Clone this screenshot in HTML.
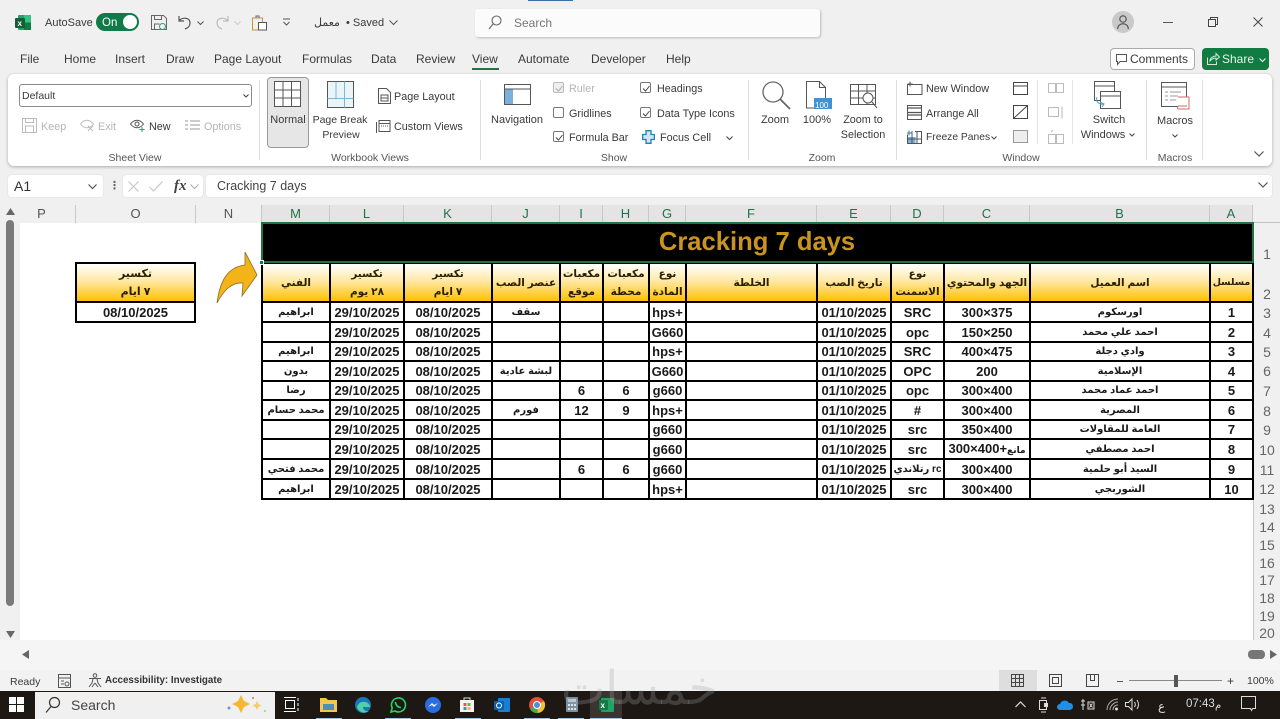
<!DOCTYPE html>
<html><head><meta charset="utf-8"><style>
html,body{margin:0;padding:0;width:1280px;height:719px;overflow:hidden;background:#f0f0f0;font-family:"Liberation Sans","DejaVu Sans",sans-serif}
.t{position:absolute;white-space:nowrap;line-height:16px;font-size:11.3px;color:#3a3a3a}
.c{transform:translateX(-50%);text-align:center}
.b{position:absolute;box-sizing:border-box}
svg{position:absolute;overflow:visible}
.dis{color:#b5b5b5}
.ch{position:absolute;top:205px;height:18px;line-height:18px;text-align:center;font-size:13px;color:#217346;background:#e4e4e4;border-right:1px solid #c8c8c8;box-sizing:border-box}
.cn{color:#555;background:#f0f0f0}
.rn{position:absolute;left:1254px;width:26px;text-align:center;font-size:14px;color:#666;line-height:16px}
table{position:absolute;border-collapse:collapse;table-layout:fixed;font-family:"Liberation Sans","DejaVu Sans",sans-serif}
td{border:2px solid #000;padding:0;text-align:center;overflow:hidden;white-space:nowrap;font-weight:bold;font-size:13px;color:#1a1a1a;line-height:15px;background:#fff;box-sizing:border-box}
td.a{font-size:10px;font-weight:bold}
tr.h td{background:linear-gradient(#fff 0%,#ffe9a8 45%,#ffc000 100%);font-size:10.5px;line-height:18px;color:#2a2000}
.cb{position:absolute;width:11px;height:11px;border:1px solid #777;border-radius:2px;box-sizing:border-box;background:#fff}
.cb svg{left:1px;top:1px}
</style></head><body>

<!-- title bar -->
<svg style="left:15px;top:15px" width="16" height="16"><rect x="3" width="13" height="15" rx="1" fill="#21a366"/><rect x="9" y="0" width="7" height="7" fill="#33c481"/><rect x="9" y="8" width="7" height="7" fill="#107c41"/><rect y="3" width="10" height="10" rx="1" fill="#185c37"/><text x="2.5" y="11" font-size="8" font-weight="bold" fill="#fff" font-family="Liberation Sans">x</text></svg>
<div class="t" style="left:45px;top:15px;font-size:11px">AutoSave</div>
<div class="b" style="left:96px;top:13px;width:43px;height:18px;border-radius:9px;background:#0f7b48"></div>
<div class="t" style="left:102px;top:15px;color:#fff;font-size:11.5px">On</div>
<div class="b" style="left:123px;top:15px;width:14px;height:14px;border-radius:7px;background:#fff"></div>
<svg style="left:151px;top:15px" width="16" height="16" fill="none" stroke="#666"><path d="M.5.500h12l3 3v11H.500z"/><path d="M3.500.500v4h7v-4M3.500 14v-5h5"/><circle cx="11.500" cy="11.500" r="3" stroke="#3d9b78"/></svg>
<svg style="left:178px;top:15px" width="14" height="15" fill="none" stroke="#555" stroke-width="1.200"><path d="M1 1v5h5M1 6c3-4 11-4 11 2 0 3-2 5-5 6"/></svg>
<svg style="left:197px;top:21px" width="7" height="4" fill="none" stroke="#555"><path d="M.5.500l3 3 3-3"/></svg>
<svg style="left:215px;top:15px" width="14" height="15" fill="none" stroke="#bbb" stroke-width="1.200"><path d="M13 1v5H8M13 6C10 2 2 2 2 8c0 3 2 5 5 6"/></svg>
<svg style="left:234px;top:21px" width="7" height="4" fill="none" stroke="#ccc"><path d="M.5.500l3 3 3-3"/></svg>
<svg style="left:252px;top:15px" width="16" height="16" fill="none" stroke="#c8933a"><path d="M.5 3h10v12H.500z"/><path d="M4 3V1h3v2" stroke="#666"/><path d="M6.500 7.500h8v7.500h-8z" stroke="#555" fill="#fff"/></svg>
<svg style="left:282px;top:18px" width="9" height="9" fill="none" stroke="#555"><path d="M1 1h7M1.500 4l3 3 3-3"/></svg>
<div class="t" style="left:314px;top:15px;font-size:11px">معمل</div>
<div class="t" style="left:346px;top:15px;font-size:11px">• Saved</div>
<svg style="left:389px;top:20px" width="9" height="5" fill="none" stroke="#555"><path d="M.5.500l4 4 4-4"/></svg>

<!-- search -->
<div class="b" style="left:475px;top:9px;width:345px;height:28px;background:#fbfbfb;border-radius:3px;box-shadow:1px 1px 2px #bbb"></div>
<svg style="left:488px;top:15px" width="14" height="15" fill="none" stroke="#666" stroke-width="1.100"><circle cx="8.500" cy="5.500" r="4.500"/><path d="M5 9l-4 5"/></svg>
<div class="t" style="left:514px;top:15px;color:#777;font-size:12px">Search</div>
<div class="b" style="left:528px;top:0;width:45px;height:1px;background:#3a6ea5"></div>

<!-- user and window controls -->
<div class="b" style="left:1112px;top:11px;width:22px;height:22px;border-radius:11px;background:#c9c9c9"></div>
<svg style="left:1117px;top:15px" width="12" height="14" fill="none" stroke="#555" stroke-width="1.200"><circle cx="6" cy="4" r="3.200"/><path d="M.7 14c0-7 10.600-7 10.600 0"/></svg>
<div class="b" style="left:1163px;top:22px;width:10px;height:1px;background:#555"></div>
<svg style="left:1208px;top:17px" width="10" height="10" fill="none" stroke="#444"><path d="M.5 2.500h7v7h-7zM2.500 2.500v-2h7v7h-2"/></svg>
<svg style="left:1253px;top:17px" width="10" height="10" fill="none" stroke="#444"><path d="M.5.500l9 9M9.500.500l-9 9"/></svg>

<!-- tabs -->
<div class="t" style="left:20px;top:51px;font-size:12px">File</div>
<div class="t" style="left:64px;top:51px;font-size:12px">Home</div>
<div class="t" style="left:115px;top:51px;font-size:12px">Insert</div>
<div class="t" style="left:166px;top:51px;font-size:12px">Draw</div>
<div class="t" style="left:214px;top:51px;font-size:12px">Page Layout</div>
<div class="t" style="left:302px;top:51px;font-size:12px">Formulas</div>
<div class="t" style="left:371px;top:51px;font-size:12px">Data</div>
<div class="t" style="left:416px;top:51px;font-size:12px">Review</div>
<div class="t" style="left:472px;top:51px;font-size:12px">View</div>
<div class="b" style="left:472px;top:68px;width:27px;height:2px;background:#217346"></div>
<div class="t" style="left:518px;top:51px;font-size:12px">Automate</div>
<div class="t" style="left:591px;top:51px;font-size:12px">Developer</div>
<div class="t" style="left:666px;top:51px;font-size:12px">Help</div>

<div class="b" style="left:1110px;top:48px;width:85px;height:22px;background:#fff;border:1px solid #aaa;border-radius:4px"></div>
<svg style="left:1116px;top:54px" width="12" height="11" fill="none" stroke="#555"><path d="M.5.500h10v7H4l-2.500 3v-3h-1z"/></svg>
<div class="t" style="left:1130px;top:51px;font-size:12px">Comments</div>
<div class="b" style="left:1202px;top:48px;width:67px;height:22px;background:#107c41;border-radius:4px"></div>
<svg style="left:1207px;top:53px" width="13" height="12" fill="none" stroke="#cfe8da"><path d="M.5 4.500v7h9v-3M3 8c0-3 3-5 6-5V.5l3.500 3.500L9 7V5C6.500 5 4.500 6 3 8z"/></svg>
<div class="t" style="left:1222px;top:51px;color:#e8f4ee;font-size:12px">Share</div>
<svg style="left:1259px;top:58px" width="7" height="4" fill="none" stroke="#fff"><path d="M.5.500l3 3 3-3"/></svg>

<!-- ribbon -->
<div class="b" style="left:8px;top:74px;width:1264px;height:92px;background:#fff;border-radius:6px;box-shadow:0 1px 3px #aaa"></div>
<div class="b" style="left:19px;top:84px;width:233px;height:23px;border:1px solid #8a8a8a;border-radius:3px;background:#fff"></div>
<div class="t" style="left:22px;top:88px;font-size:10.500px">Default</div>
<svg style="left:243px;top:94px" width="6" height="4" fill="none" stroke="#444"><path d="M.5.500l2.500 2.500 2.500-2.500"/></svg>
<svg style="left:22px;top:118px" width="15" height="15" fill="none" stroke="#bbb"><path d="M.5.500h14v14H.500zM3.500.500v4h8v-4M3.500 14v-6h8v6"/></svg>
<div class="t dis" style="left:41px;top:119px;font-size:10.800px">Keep</div>
<svg style="left:80px;top:119px" width="15" height="13" fill="none" stroke="#bbb"><path d="M.5 5c4-5 9-5 13 0-4 5-9 5-13 0z"/><path d="M8 7l5 5M13 7l-5 5"/></svg>
<div class="t dis" style="left:98px;top:119px;font-size:10.800px">Exit</div>
<svg style="left:130px;top:120px" width="16" height="12" fill="none" stroke="#555"><path d="M.5 4c4-5 9-5 13 0-4 5-9 5-13 0z"/><circle cx="7" cy="4" r="2"/><path d="M12 7v5M9.500 9.500h5" stroke="#3a9b6a"/></svg>
<div class="t" style="left:149px;top:119px;font-size:10.800px">New</div>
<svg style="left:185px;top:119px" width="15" height="12" fill="none" stroke="#bbb" stroke-width="1.500"><path d="M0 2h3M5 2h10M0 6h3M5 6h10M0 10h3M5 10h10"/></svg>
<div class="t dis" style="left:204px;top:119px;font-size:10.800px">Options</div>
<div class="t c" style="left:135px;top:150px;font-size:10.500px;color:#555">Sheet View</div>
<div class="b" style="left:259px;top:80px;width:1px;height:80px;background:#dcdcdc"></div>

<div class="b" style="left:267px;top:77px;width:42px;height:71px;background:#e6e6e6;border:1px solid #999;border-radius:4px"></div>
<svg style="left:274px;top:81px" width="28" height="27" fill="#fff" stroke="#555"><path d="M.5.500h26v25H.500zM9 .500v25M17.500 .500v25M.5 9h26M.5 17h26"/></svg>
<div class="t c" style="left:288px;top:112px;font-size:11px">Normal</div>
<svg style="left:327px;top:81px" width="27" height="27" fill="none" stroke="#555"><rect x=".5" y=".5" width="26" height="26" fill="#eaf5f8"/><path d="M9 .500v18M17.500 .500v26M.5 17.500h26" stroke="#7fb7d0"/></svg>
<div class="t c" style="left:340px;top:112px;font-size:10.500px">Page Break</div>
<div class="t c" style="left:341px;top:127px;font-size:10.500px">Preview</div>
<svg style="left:378px;top:88px" width="13" height="16" fill="none" stroke="#555"><path d="M.5.500h8l4 4v11H.500z"/><path d="M3 7h7v6H3zM3 10h7"/></svg>
<div class="t" style="left:394px;top:89px;font-size:10.800px">Page Layout</div>
<svg style="left:376px;top:118px" width="15" height="15" fill="none" stroke="#555"><path d="M3 2.500h11v11H3zM.5 4v11M3 5.500h11"/><path d="M5 8h7" stroke-dasharray="1 1"/></svg>
<div class="t" style="left:394px;top:119px;font-size:10.800px">Custom Views</div>
<div class="t c" style="left:370px;top:150px;font-size:10.500px;color:#555">Workbook Views</div>
<div class="b" style="left:480px;top:80px;width:1px;height:80px;background:#dcdcdc"></div>

<svg style="left:504px;top:84px" width="27" height="21" fill="#fff" stroke="#555"><path d="M.5.500h26v20H.500z"/><rect x="1" y="5" width="8" height="15" fill="#7ab0de" stroke="none"/><path d="M.5 5h26"/></svg>
<div class="t c" style="left:517px;top:112px;font-size:11px">Navigation</div>

<div class="cb" style="left:553px;top:82px;border-color:#bbb;background:#eee"><svg width="9" height="9" fill="none" stroke="#aaa"><path d="M1 4.500l2.500 2.500 4-5"/></svg></div>
<div class="t dis" style="left:569px;top:81px;font-size:10.800px">Ruler</div>
<div class="cb" style="left:553px;top:107px"></div>
<div class="t" style="left:569px;top:106px;font-size:10.800px">Gridlines</div>
<div class="cb" style="left:553px;top:131px"><svg width="9" height="9" fill="none" stroke="#444"><path d="M1 4.500l2.500 2.500 4-5"/></svg></div>
<div class="t" style="left:569px;top:130px;font-size:10.800px">Formula Bar</div>
<div class="cb" style="left:640px;top:82px"><svg width="9" height="9" fill="none" stroke="#444"><path d="M1 4.500l2.500 2.500 4-5"/></svg></div>
<div class="t" style="left:657px;top:81px;font-size:10.800px">Headings</div>
<div class="cb" style="left:640px;top:107px"><svg width="9" height="9" fill="none" stroke="#444"><path d="M1 4.500l2.500 2.500 4-5"/></svg></div>
<div class="t" style="left:657px;top:106px;font-size:10.800px">Data Type Icons</div>
<svg style="left:642px;top:130px" width="13" height="14" fill="#cfe6f5" stroke="#2b7cb3" stroke-width="1.300"><path d="M4 .7h5v3.800h3.300v5H9v3.800H4V9.500H.7v-5H4z"/></svg>
<div class="t" style="left:660px;top:130px;font-size:10.800px">Focus Cell</div>
<svg style="left:726px;top:136px" width="7" height="4" fill="none" stroke="#444"><path d="M.5.500l3 3 3-3"/></svg>
<div class="t c" style="left:614px;top:150px;font-size:10.500px;color:#555">Show</div>
<div class="b" style="left:748px;top:80px;width:1px;height:80px;background:#dcdcdc"></div>

<svg style="left:762px;top:81px" width="29" height="29" fill="none" stroke="#666" stroke-width="1.300"><circle cx="11" cy="11" r="10"/><path d="M18 18l10 10" stroke-width="1.800"/></svg>
<div class="t c" style="left:775px;top:112px;font-size:11px">Zoom</div>
<svg style="left:806px;top:81px" width="27" height="29" fill="none" stroke="#555"><path d="M.5 27V.5h13l6 6V27z" fill="#fff"/><path d="M13.500 .5v6h6"/><rect x="8" y="17" width="18" height="11" fill="#3d93d6" stroke="none"/></svg>
<div class="t" style="left:815px;top:98px;font-size:8px;color:#fff">100</div>
<div class="t c" style="left:817px;top:112px;font-size:11px">100%</div>
<svg style="left:850px;top:84px" width="28" height="26" fill="none" stroke="#555"><path d="M.5.500h25v20H.500zM8.500.500v20M17 .500v20M.5 7h25M.5 14h25"/><circle cx="18" cy="14" r="5" fill="#fff"/><path d="M22 18l5 6"/></svg>
<div class="t c" style="left:863px;top:112px;font-size:10.800px">Zoom to</div>
<div class="t c" style="left:863px;top:127px;font-size:10.800px">Selection</div>
<div class="t c" style="left:822px;top:150px;font-size:10.500px;color:#555">Zoom</div>
<div class="b" style="left:896px;top:80px;width:1px;height:80px;background:#dcdcdc"></div>

<svg style="left:907px;top:81px" width="16" height="14" fill="none" stroke="#555"><path d="M.5 3.500h14.500v10H.500zM3 .5v5M.5 3h5M7 3.500h8" /></svg>
<div class="t" style="left:926px;top:81px;font-size:10.800px">New Window</div>
<svg style="left:907px;top:105px" width="15" height="15" fill="none" stroke="#555"><path d="M.5.500h14v14H.500z"/><path d="M.5 3h14M.5 7.500h14M.5 10h14" stroke-width="1.300"/></svg>
<div class="t" style="left:926px;top:106px;font-size:10.800px">Arrange All</div>
<svg style="left:907px;top:130px" width="15" height="14" fill="none" stroke="#555"><rect x=".5" y="7" width="8" height="7" fill="#7ab0de" stroke="none"/><path d="M.5 4.500v9h14v-12H8M.5 9h14M5 1v12M10 1v12"/><path d="M2 .5v5M0 3h5" stroke="#2b7cb3"/></svg>
<div class="t" style="left:926px;top:130px;font-size:10.300px">Freeze Panes</div>
<svg style="left:991px;top:136px" width="6" height="4" fill="none" stroke="#444"><path d="M.5.500l2.500 2.500 2.500-2.500"/></svg>
<svg style="left:1013px;top:82px" width="15" height="13" fill="none" stroke="#444"><path d="M.5.500h14v12H.500zM.5 4h14"/></svg>
<svg style="left:1013px;top:105px" width="15" height="14" fill="none" stroke="#444"><path d="M.5.500h14v13H.500zM.5 13.500l14-13"/></svg>
<svg style="left:1013px;top:130px" width="15" height="13" fill="#eee" stroke="#999"><path d="M.5.500h14v12H.500z"/></svg>
<div class="b" style="left:1037px;top:80px;width:1px;height:64px;background:#e5e5e5"></div>
<svg style="left:1048px;top:82px" width="16" height="11" fill="none" stroke="#bbb"><path d="M.5 1.500h7v9h-7zM8.500 1.500h7v9h-7z"/></svg>
<svg style="left:1048px;top:106px" width="16" height="13" fill="none" stroke="#bbb"><path d="M.5 1.500h10v9h-10zM14 .5v12"/></svg>
<svg style="left:1048px;top:129px" width="16" height="15" fill="none" stroke="#bbb"><path d="M.5 5.500h7v9h-7zM8.500 5.500h7v9h-7zM3 3l2-2"/></svg>
<div class="b" style="left:1072px;top:80px;width:1px;height:64px;background:#e5e5e5"></div>
<svg style="left:1094px;top:81px" width="30" height="28" fill="#fff" stroke="#555"><path d="M.5.500h20v19H.500zM.5 5h20"/><path d="M6.500 10.500h20v17h-20zM6.500 15h20"/><path d="M3 16c-2 5 3 8 7 7M6 21l4 2-2 3" fill="none" stroke="#4ea3c4"/></svg>
<div class="t c" style="left:1109px;top:112px;font-size:11px">Switch</div>
<div class="t c" style="left:1103px;top:127px;font-size:11px">Windows</div>
<svg style="left:1129px;top:133px" width="6" height="4" fill="none" stroke="#444"><path d="M.5.500l2.500 2.500 2.500-2.500"/></svg>
<div class="t c" style="left:1021px;top:150px;font-size:10.500px;color:#555">Window</div>
<div class="b" style="left:1146px;top:80px;width:1px;height:80px;background:#dcdcdc"></div>
<svg style="left:1161px;top:82px" width="30" height="28" fill="none" stroke="#555"><path d="M.5.500h25v24H.500zM.5 5h25"/><path d="M4 10h3M9 10h11M4 14h3M9 14h8M4 18h3M9 18h6" stroke="#999"/><path d="M17 15h11v12H18c-2 0-2-3 0-3h8" stroke="#d46a6a" fill="#fff"/></svg>
<div class="t c" style="left:1175px;top:113px;font-size:11px">Macros</div>
<svg style="left:1172px;top:134px" width="6" height="4" fill="none" stroke="#444"><path d="M.5.500l2.500 2.500 2.500-2.500"/></svg>
<div class="t c" style="left:1175px;top:150px;font-size:10.500px;color:#555">Macros</div>
<div class="b" style="left:1202px;top:80px;width:1px;height:80px;background:#e2e2e2"></div>
<svg style="left:1254px;top:151px" width="10" height="6" fill="none" stroke="#555" stroke-width="1.200"><path d="M.5.500l4.500 4.500 4.500-4.500"/></svg>

<!-- formula bar -->
<div class="b" style="left:8px;top:175px;width:95px;height:22px;background:#fff;border-radius:3px;box-shadow:0 0 1px #bbb"></div>
<div class="t" style="left:14px;top:178px;font-size:14px;color:#333">A1</div>
<svg style="left:88px;top:184px" width="9" height="5" fill="none" stroke="#444"><path d="M.5.500l4 4 4-4"/></svg>
<div class="t" style="left:109px;top:178px;font-weight:bold;color:#666;font-size:11px">⋮</div>
<div class="b" style="left:123px;top:175px;width:80px;height:22px;background:#fff;border-radius:3px;box-shadow:0 0 1px #bbb"></div>
<svg style="left:128px;top:181px" width="12" height="11" fill="none" stroke="#c8c8c8" stroke-width="1.200"><path d="M.5.500l10 10M10.500.500l-10 10"/></svg>
<svg style="left:149px;top:181px" width="14" height="11" fill="none" stroke="#c8c8c8" stroke-width="1.200"><path d="M.5 6l4 4 9-9.500"/></svg>
<div class="t" style="left:174px;top:178px;font-family:'Liberation Serif',serif;font-style:italic;font-weight:bold;font-size:15px;color:#444">fx</div>
<svg style="left:190px;top:184px" width="9" height="5" fill="none" stroke="#aaa"><path d="M.5.500l4 4 4-4"/></svg>
<div class="b" style="left:206px;top:175px;width:1066px;height:22px;background:#fff;border-radius:3px;box-shadow:0 0 1px #bbb"></div>
<div class="t" style="left:217px;top:178px;font-size:12.500px;color:#444">Cracking 7 days</div>
<svg style="left:1258px;top:182px" width="10" height="6" fill="none" stroke="#555" stroke-width="1.200"><path d="M.5.500l4.500 4.500 4.500-4.500"/></svg>

<!-- sheet -->
<div class="b" style="left:20px;top:223px;width:1233px;height:417px;background:#fff"></div>
<div class="b" style="left:0;top:205px;width:1280px;height:18px;background:#f0f0f0"></div>
<div class="b" style="left:20px;top:222px;width:1260px;height:1px;background:#c0c0c0"></div>
<div class="ch cn" style="left:20px;width:56px;padding-right:12px">P</div>
<div class="ch cn" style="left:76px;width:120px">O</div>
<div class="ch cn" style="left:196px;width:66px">N</div>
<div class="ch" style="left:262px;width:68px">M</div>
<div class="ch" style="left:330px;width:74px">L</div>
<div class="ch" style="left:404px;width:88px">K</div>
<div class="ch" style="left:492px;width:68px">J</div>
<div class="ch" style="left:560px;width:43px">I</div>
<div class="ch" style="left:603px;width:46px">H</div>
<div class="ch" style="left:649px;width:37px">G</div>
<div class="ch" style="left:686px;width:131px">F</div>
<div class="ch" style="left:817px;width:74px">E</div>
<div class="ch" style="left:891px;width:53px">D</div>
<div class="ch" style="left:944px;width:86px">C</div>
<div class="ch" style="left:1030px;width:180px">B</div>
<div class="ch" style="left:1210px;width:43px">A</div>
<div class="b" style="left:1253px;top:223px;width:1px;height:417px;background:#c8c8c8"></div>

<div class="rn" style="top:246px">1</div><div class="rn" style="top:286px">2</div><div class="rn" style="top:305px">3</div><div class="rn" style="top:325px">4</div><div class="rn" style="top:344px">5</div><div class="rn" style="top:363px">6</div><div class="rn" style="top:383px">7</div><div class="rn" style="top:403px">8</div><div class="rn" style="top:422px">9</div><div class="rn" style="top:442px">10</div><div class="rn" style="top:462px">11</div><div class="rn" style="top:481px">12</div><div class="rn" style="top:501px">13</div><div class="rn" style="top:519px">14</div><div class="rn" style="top:537px">15</div><div class="rn" style="top:555px">16</div><div class="rn" style="top:572px">17</div><div class="rn" style="top:590px">18</div><div class="rn" style="top:608px">19</div><div class="rn" style="top:625px">20</div>

<!-- vertical scrollbar -->
<svg style="left:6px;top:208px" width="9" height="7" fill="#666"><path d="M4.500 0L9 7H0z"/></svg>
<div class="b" style="left:6px;top:220px;width:8px;height:386px;background:#7a7a7a;border-radius:4px"></div>
<svg style="left:6px;top:631px" width="9" height="7" fill="#666"><path d="M0 0h9L4.500 7z"/></svg>

<!-- A1 merged title -->
<div class="b" style="left:262px;top:223px;width:991px;height:39px;background:#000"></div>
<div class="t c" style="left:757px;top:228px;line-height:28px;font-size:25.600px;font-weight:bold;color:#c9941f">Cracking 7 days</div>
<div class="b" style="left:261px;top:222px;width:993px;height:41px;border:2px solid #217346;z-index:3"></div>
<div class="b" style="left:259px;top:260px;width:5px;height:5px;background:#217346;border:1px solid #fff;z-index:4"></div>

<!-- main table -->
<table style="left:261px;top:262px;width:991px;height:236px">
<colgroup><col style="width:68px"><col style="width:74px"><col style="width:88px"><col style="width:68px"><col style="width:43px"><col style="width:46px"><col style="width:37px"><col style="width:131px"><col style="width:74px"><col style="width:53px"><col style="width:86px"><col style="width:180px"><col style="width:43px"></colgroup>
<tr class="h" style="height:39px"><td>الفني</td><td>تكسير<br>٢٨ يوم</td><td>تكسير<br>٧ ايام</td><td>عنصر الصب</td><td>مكعبات<br>موقع</td><td>مكعبات<br>محطة</td><td>نوع<br>المادة</td><td>الخلطة</td><td>تاريخ الصب</td><td>نوع<br>الاسمنت</td><td>الجهد والمحتوي</td><td>اسم العميل</td><td style="font-size:9.500px">مسلسل</td></tr>
<tr style="height:20px"><td class="a">ابراهيم</td><td>29/10/2025</td><td>08/10/2025</td><td class="a">سقف</td><td></td><td></td><td>hps+</td><td></td><td>01/10/2025</td><td>SRC</td><td>300×375</td><td class="a">اورسكوم</td><td>1</td></tr>
<tr style="height:20px"><td class="a"></td><td>29/10/2025</td><td>08/10/2025</td><td></td><td></td><td></td><td>G660</td><td></td><td>01/10/2025</td><td>opc</td><td>150×250</td><td class="a">احمد علي محمد</td><td>2</td></tr>
<tr style="height:19px"><td class="a">ابراهيم</td><td>29/10/2025</td><td>08/10/2025</td><td></td><td></td><td></td><td>hps+</td><td></td><td>01/10/2025</td><td>SRC</td><td>400×475</td><td class="a">وادي دجلة</td><td>3</td></tr>
<tr style="height:20px"><td class="a">بدون</td><td>29/10/2025</td><td>08/10/2025</td><td class="a">لبشة عادية</td><td></td><td></td><td>G660</td><td></td><td>01/10/2025</td><td>OPC</td><td>200</td><td class="a">الإسلامية</td><td>4</td></tr>
<tr style="height:19px"><td class="a">رضا</td><td>29/10/2025</td><td>08/10/2025</td><td></td><td>6</td><td>6</td><td>g660</td><td></td><td>01/10/2025</td><td>opc</td><td>300×400</td><td class="a">احمد عماد محمد</td><td>5</td></tr>
<tr style="height:20px"><td class="a">محمد حسام</td><td>29/10/2025</td><td>08/10/2025</td><td class="a">فورم</td><td>12</td><td>9</td><td>hps+</td><td></td><td>01/10/2025</td><td>#</td><td>300×400</td><td class="a">المصرية</td><td>6</td></tr>
<tr style="height:19px"><td class="a"></td><td>29/10/2025</td><td>08/10/2025</td><td></td><td></td><td></td><td>g660</td><td></td><td>01/10/2025</td><td>src</td><td>350×400</td><td class="a">العامة للمقاولات</td><td>7</td></tr>
<tr style="height:20px"><td class="a"></td><td>29/10/2025</td><td>08/10/2025</td><td></td><td></td><td></td><td>g660</td><td></td><td>01/10/2025</td><td>src</td><td>300×400+<span style="font-size:9px">مانع</span></td><td class="a">احمد مصطفي</td><td>8</td></tr>
<tr style="height:20px"><td class="a">محمد فتحي</td><td>29/10/2025</td><td>08/10/2025</td><td></td><td>6</td><td>6</td><td>g660</td><td></td><td>01/10/2025</td><td style="font-size:10px">رتلاندي rc</td><td>300×400</td><td class="a">السيد أبو حلمية</td><td>9</td></tr>
<tr style="height:20px"><td class="a">ابراهيم</td><td>29/10/2025</td><td>08/10/2025</td><td></td><td></td><td></td><td>hps+</td><td></td><td>01/10/2025</td><td>src</td><td>300×400</td><td class="a">الشوربجي</td><td>10</td></tr>
</table>

<!-- side table -->
<table style="left:75px;top:262px;width:119px;height:59px">
<colgroup><col style="width:119px"></colgroup>
<tr class="h" style="height:39px"><td style="font-size:11px">تكسير<br>٧ ايام</td></tr>
<tr style="height:20px"><td>08/10/2025</td></tr>
</table>

<!-- arrow -->
<svg style="left:0;top:0" width="1" height="1"><path d="M217 303C220 280 228 267 245 265L245 252L257 275L242 296L243 283C232 282 224 290 217 303Z" fill="#f5b31a" stroke="#8a6d1d" stroke-width=".8"/></svg>

<!-- horizontal scrollbar area -->
<div class="b" style="left:0;top:640px;width:1280px;height:30px;background:#f5f5f5"></div>
<svg style="left:22px;top:650px" width="7" height="9" fill="#666"><path d="M7 0v9L0 4.500z"/></svg>
<div class="b" style="left:1248px;top:650px;width:17px;height:9px;border-radius:4px;background:#777"></div>
<svg style="left:1270px;top:650px" width="7" height="9" fill="#666"><path d="M0 0v9l7-4.500z"/></svg>

<!-- status bar -->
<div class="b" style="left:0;top:670px;width:1280px;height:21px;background:#f2f2f2"></div>
<div class="t" style="left:10px;top:674px;font-size:10.500px">Ready</div>
<svg style="left:58px;top:674px" width="13" height="14" fill="none" stroke="#555"><path d="M.5.500h12v13H.500zM.5 4h12M3 7h3M3 10h3"/><circle cx="9" cy="10" r="2"/></svg>
<svg style="left:88px;top:673px" width="14" height="15" fill="none" stroke="#555"><circle cx="7" cy="2.500" r="1.800"/><path d="M1 5.500h12M5 6l-1 4-3 4M9 6l1 4 3 4M7 10l-3 4M7 10l3 4"/></svg>
<div class="t" style="left:105px;top:673px;font-size:9.800px;font-weight:bold;color:#333">Accessibility: Investigate</div>
<div class="b" style="left:999px;top:670px;width:38px;height:21px;background:#dedede"></div>
<svg style="left:1011px;top:674px" width="13" height="13" fill="none" stroke="#444"><path d="M.5.500h12v12H.500zM4.500 .5v12M8.500 .5v12M.5 4.500h12M.5 8.500h12"/></svg>
<svg style="left:1049px;top:674px" width="13" height="13" fill="none" stroke="#444"><path d="M.5.500h12v12H.500zM3.500 3.500h6v6h-6z"/></svg>
<svg style="left:1086px;top:674px" width="13" height="13" fill="none" stroke="#444"><path d="M.5.500h12v12H.500zM4.500 .5v6h4v-6"/></svg>
<div class="b" style="left:1117px;top:681px;width:6px;height:1px;background:#555"></div>
<div class="b" style="left:1129px;top:680px;width:93px;height:1px;background:#888"></div>
<div class="b" style="left:1174px;top:675px;width:4px;height:12px;background:#555"></div>
<div class="t" style="left:1227px;top:673px;font-size:12px">+</div>
<div class="t" style="left:1247px;top:673px;font-size:10.500px">100%</div>

<!-- taskbar -->
<div class="b" style="left:0;top:691px;width:1280px;height:28px;background:#1e1814"></div>
<svg style="left:9px;top:697px" width="15" height="15" fill="#fff"><path d="M0 0h7v7H0zM8 0h7v7H8zM0 8h7v7H0zM8 8h7v7H8z"/></svg>
<div class="b" style="left:35px;top:692px;width:240px;height:27px;background:#f0f0f0"></div>
<svg style="left:45px;top:697px" width="15" height="16" fill="none" stroke="#333" stroke-width="1.200"><circle cx="9.500" cy="5.500" r="5"/><path d="M6 9.500l-5 6"/></svg>
<div class="t" style="left:71px;top:697px;font-size:14px;color:#444">Search</div>
<svg style="left:225px;top:694px" width="44" height="22"><path d="M16 1l3 6 6 3-6 3-3 6-3-6-6-3 6-3z" fill="#f7b733"/><circle cx="28" cy="4" r="1" fill="#d96b4a"/><path d="M32 7l1.500 3 3 1.500-3 1.500L32 16l-1.500-3-3-1.500 3-1.500z" fill="#f2cf6c"/><circle cx="4" cy="14" r="1.500" fill="#5aa0dc"/><circle cx="40" cy="17" r="1" fill="#8cc"/></svg>
<svg style="left:284px;top:697px" width="16" height="15" fill="none" stroke="#fff"><path d="M1.500 3.500h9v8h-9zM0 .5h12M0 14.500h12M14 1v3M14 6v3M14 11v3"/></svg>
<svg style="left:320px;top:697px" width="17" height="15"><path d="M0 1h6l2 2h9v12H0z" fill="#f2c94c"/><rect x="3" y="7" width="11" height="6" fill="#4a90b8"/></svg>
<svg style="left:355px;top:697px" width="16" height="16"><circle cx="8" cy="8" r="8" fill="#1877b8"/><path d="M2 10c2-8 13-6 13 0H8c0 3 3 5 6 4-5 4-11 0-12-4z" fill="#4fd1a5"/></svg>
<svg style="left:390px;top:697px" width="16" height="16" fill="none" stroke="#25d366" stroke-width="1.600"><path d="M1 15l1.200-4A7 7 0 1 1 5 14z"/><path d="M5.500 5c0 3 2.500 5.500 5.500 5.500"/></svg>
<svg style="left:425px;top:697px" width="16" height="16"><circle cx="8" cy="8" r="8" fill="#2a6de0"/><path d="M3 10l4-4 2 2 4-2-4 4-2-2z" fill="#fff"/></svg>
<svg style="left:460px;top:697px" width="14" height="15"><path d="M0 3h14v12H0z" fill="#f4f4f4"/><path d="M4 3V1h6v2" stroke="#ddd" fill="none"/><path d="M3.500 6h3v3h-3z" fill="#e55"/><path d="M7.500 6h3v3h-3z" fill="#6b3"/><path d="M3.500 10h3v3h-3z" fill="#39c"/><path d="M7.500 10h3v3h-3z" fill="#fb2"/></svg>
<svg style="left:494px;top:697px" width="16" height="16"><rect x="4" y="1" width="12" height="14" rx="1" fill="#1a7fd1"/><rect y="4" width="10" height="9" rx="1" fill="#0f5ea8"/><circle cx="5" cy="8.500" r="2.500" fill="none" stroke="#fff"/></svg>
<svg style="left:529px;top:697px" width="16" height="16"><circle cx="8" cy="8" r="8" fill="#e0503c"/><path d="M8 8L1 12a8 8 0 0 0 8 4z" fill="#4aa956"/><path d="M8 8l7-4a8 8 0 0 1-6 12z" fill="#f4c430"/><circle cx="8" cy="8" r="3.500" fill="#4a8fe0" stroke="#fff"/></svg>
<svg style="left:566px;top:697px" width="12" height="15"><rect width="12" height="15" rx="1" fill="#7b8fa3"/><rect x="2" y="2" width="8" height="3" fill="#c7d3de"/><path d="M2 7h2v2H2zM5 7h2v2H5zM8 7h2v2H8zM2 11h2v2H2zM5 11h2v2H5zM8 11h2v2H8z" fill="#dde5ea"/></svg>
<div class="b" style="left:590px;top:691px;width:32px;height:28px;background:#3a3531"></div>
<svg style="left:599px;top:698px" width="15" height="14"><rect x="2" width="13" height="14" rx="1" fill="#21a366"/><rect width="9" height="10" y="2" rx="1" fill="#107c41"/><text x="1.500" y="10" font-size="8" font-weight="bold" fill="#fff" font-family="Liberation Sans">x</text></svg>
<div class="b" style="left:316px;top:718px;width:26px;height:1px;background:#9cc4e4"></div>
<div class="b" style="left:385px;top:718px;width:26px;height:1px;background:#9cc4e4"></div>
<div class="b" style="left:455px;top:718px;width:26px;height:1px;background:#9cc4e4"></div>
<div class="b" style="left:524px;top:718px;width:26px;height:1px;background:#9cc4e4"></div>
<div class="b" style="left:558px;top:718px;width:26px;height:1px;background:#9cc4e4"></div>
<div class="b" style="left:590px;top:718px;width:32px;height:1px;background:#9cc4e4"></div>

<!-- tray -->
<svg style="left:1015px;top:701px" width="11" height="7" fill="none" stroke="#ddd" stroke-width="1.200"><path d="M.5 6L5.500 1l5 5"/></svg>
<svg style="left:1039px;top:697px" width="10" height="16" fill="none" stroke="#ddd"><path d="M.5 3.500h7v9h-7zM2 1h5M2 15h5"/><rect x="5" y="6" width="4" height="4" fill="#ddd" stroke="none"/></svg>
<svg style="left:1057px;top:700px" width="16" height="10"><path d="M3 10a3 3 0 0 1 0-6 5 5 0 0 1 9-1 3.500 3.500 0 0 1 1 7z" fill="#1e90e8"/></svg>
<svg style="left:1081px;top:698px" width="14" height="13" fill="none" stroke="#ddd"><path d="M2 1v11M0 3h4M0 7h4M7 4h6v7H7zM8.500 5.500l3 4M11.500 5.500l-3 4"/></svg>
<svg style="left:1106px;top:698px" width="13" height="13" fill="none" stroke="#aaa"><path d="M1 12C1 6 6 1 12 1M4 12c0-4 4-8 8-8M7 12c0-3 2-5 5-5"/><circle cx="10.500" cy="11" r="1.500" fill="#ddd" stroke="none"/></svg>
<svg style="left:1125px;top:698px" width="15" height="13" fill="none" stroke="#ddd"><path d="M.5 4.500h3L7 1v11L3.500 8.500h-3zM9.500 4c1 1.500 1 3.500 0 5M12 2c2 3 2 6 0 9"/></svg>
<div class="t" style="left:1158px;top:698px;color:#ddd;font-size:12px">ع</div>
<div class="t" style="left:1186px;top:696px;color:#ddd;font-size:11.500px">07:43</div>
<div class="t" style="left:1215px;top:698px;color:#ddd;font-size:10px">م</div>
<svg style="left:1241px;top:696px" width="16" height="16" fill="none" stroke="#ddd"><path d="M.5.500h14v12h-3l-1 2-1-2h-9z"/></svg>

<!-- watermark -->
<div class="t" style="left:561px;top:663px;line-height:50px;font-size:47px;font-weight:normal;color:rgba(160,160,160,.28);z-index:9">خمسات</div>

</body></html>
